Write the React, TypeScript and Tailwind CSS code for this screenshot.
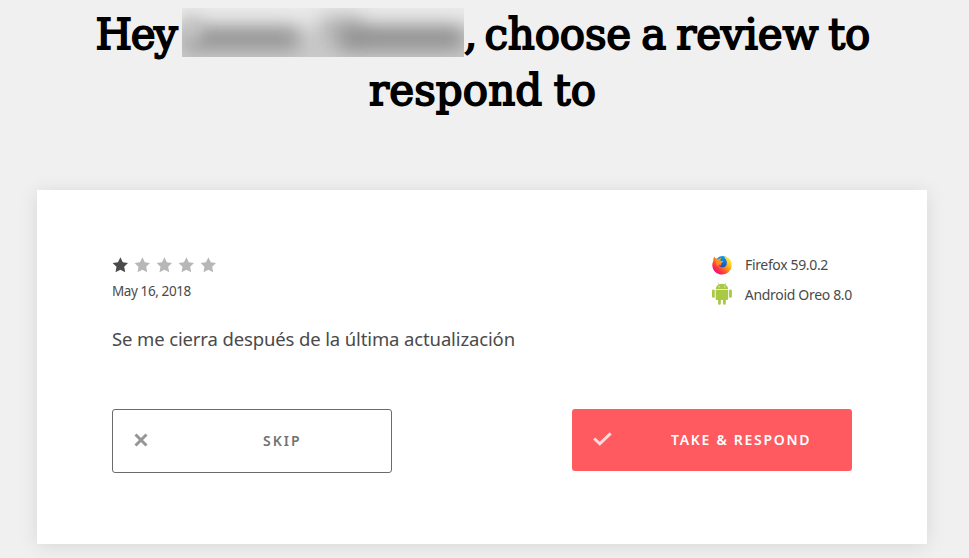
import React from "react";

const body = "font-['Noto_Sans','Open_Sans',sans-serif]";

function Star({ on }: { on?: boolean }) {
  return (
    <svg viewBox="0 0 16 16" className={on ? "size-4 text-[#4a4a4a]" : "size-4 text-[#b7b7b7]"}>
      <path fill="currentColor" d="M8.400 .3l2.400 4.900 5.200.8-3.800 3.800 1 5.500-4.800-2.500-4.900 2.500 1-5.500L.6 6l5.400-.8z" />
    </svg>
  );
}

function Firefox() {
  return (
    <svg viewBox="0 0 20 20" className="block size-5">
      <defs>
        <linearGradient id="fox" x1="0.9" y1="0.1" x2="0.15" y2="0.85">
          <stop offset="0" stopColor="#fff14a" />
          <stop offset="0.3" stopColor="#ffbd18" />
          <stop offset="0.55" stopColor="#ff7a1c" />
          <stop offset="0.8" stopColor="#ff3048" />
          <stop offset="1" stopColor="#e8137a" />
        </linearGradient>
        <linearGradient id="globe" x1="0.5" y1="0" x2="0.4" y2="1">
          <stop offset="0" stopColor="#0a9af0" />
          <stop offset="0.6" stopColor="#1460d0" />
          <stop offset="1" stopColor="#2a2b80" />
        </linearGradient>
      </defs>
      <circle cx="10.5" cy="8.4" r="7.4" fill="url(#globe)" />
      <path fill="url(#fox)" d="M2.5 1.6c.4 1 .9 1.7 1.7 2.1C5.300 3.400 6 3.500 6.900 4.100 8 3 9 2.800 9.500 2.700c-.9.900-1.300 1.700-1.300 2.600.8.700 2 .8 3 .9-.2 1.200-1.800 1.400-2 2.500-.3.700-.1 1.200.2 1.700-1 0-1.500-.3-2.100-.7.500 2.100 2.300 3 4.100 2.500 1.700-.4 2.600-1.500 3.300-2.800.5-2.500-.2-4.900-1.700-6.200-.5-.5-.8-1-.7-1.900 1.500.2 3 .8 4 2.100.3-.1.500-.2.600-.4 1.700 1.800 2.900 4.200 2.800 7.100C19.600 15.500 15.400 19.600 10 19.600S.3 15.400.3 10C.3 8.500.6 7.200 1.300 6 1.200 4.300 1.600 2.800 2.500 1.600z" />
      <path fill="#ff9818" d="M3.500 5.800c.8-1 2.300-1.300 3.600-.8L8.200 6.200l2.500.3c-.4 1-1.600 1.200-2 2.100L6.800 9.200 5 11z" opacity=".8" />
    </svg>
  );
}

function Android() {
  return (
    <svg viewBox="0 0 20 23" className="-mt-px block h-[23px] w-5" fill="#a9c944">
      <path d="M3.700 6.900C3.900 4.700 5.200 3.300 6.700 2.500L5.600.6l.4-.3 1.200 2a8 8 0 0 1 5.600 0L14 .3l.4.3-1.100 1.900c1.600.8 2.800 2.200 3 4.400z" />
      <path d="M3.700 7.600h12.600v9.200a1.300 1.300 0 0 1-1.300 1.300h-1.100v3.400a1.400 1.400 0 0 1-2.800 0v-3.400H8.900v3.400a1.400 1.400 0 0 1-2.800 0v-3.400H5a1.300 1.300 0 0 1-1.300-1.300z" />
      <rect x="0" y="7.400" width="2.800" height="8.500" rx="1.400" />
      <rect x="17.200" y="7.400" width="2.800" height="8.500" rx="1.400" />
      <circle cx="7.200" cy="4.700" r=".6" fill="#fff" />
      <circle cx="12.800" cy="4.700" r=".6" fill="#fff" />
    </svg>
  );
}

function HiddenName() {
  return (
    <span className="relative mt-2 block h-[49px] w-[282px] shrink-0 overflow-hidden bg-[#ebebeb]">
      <span className="absolute -left-4 top-[22px] h-[60px] w-[320px] bg-[#cccccc] blur-[9px]" />
      <span className="absolute left-[2px] top-[20px] h-[21px] w-[115px] bg-[#8c8c8c] blur-[10px]" />
      <span className="absolute left-[0px] top-[8px] h-[26px] w-[18px] bg-[#c4c4c4] blur-[8px]" />
      <span className="absolute left-[136px] top-[8px] h-[30px] w-[44px] bg-[#b8b8b8] blur-[10px]" />
      <span className="absolute left-[158px] top-[19px] h-[22px] w-[124px] bg-[#888888] blur-[10px]" />
    </span>
  );
}

const heading = "font-['DejaVu_Serif',serif] font-normal text-[42px] [word-spacing:-3px] [-webkit-text-stroke:1.8px_black]";

export default function App() {
  return (
    <main className="h-[558px] w-[969px] overflow-hidden bg-[#f0f0f0]">
      <h1 className={`${heading} h-[190px] leading-[56px] text-black`}>
        <span className="flex h-14 pl-[95.5px]">
          <span className="w-[86.5px] shrink-0 whitespace-nowrap pt-[7px] tracking-[-1.5px]">Hey</span>
          <HiddenName />
          <span className="whitespace-nowrap pt-[7px] tracking-[-0.17px]">
            <span className="tracking-[-1.6px]">, </span>choose a review to
          </span>
        </span>
        <span className="block whitespace-nowrap pl-[369px] pt-[7px] tracking-[0.1px] [word-spacing:-2px]">respond to</span>
      </h1>
      <section className={`${body} ml-[37px] h-[354px] w-[890px] bg-white px-[75px] pt-[65px] text-[#4a4a4a] shadow-[0_2px_18px_rgba(0,0,0,0.1)]`}>
        <div className="flex h-[72px] justify-between text-[14px]">
          <div>
            <div className="flex gap-1.5 pt-0.5">
              <Star on />
              <Star />
              <Star />
              <Star />
              <Star />
            </div>
            <div className="mt-[8px] whitespace-nowrap text-[13.5px] leading-5 tracking-[-0.4px]">May 16, 2018</div>
          </div>
          <div className="w-[140px]">
            <div className="flex h-5 items-center">
              <Firefox />
              <span className="ml-[13px] whitespace-nowrap leading-5 tracking-[-0.35px]">Firefox 59.0.2</span>
            </div>
            <div className="mt-[7px] flex h-6 items-center">
              <Android />
              <span className="ml-[13px] whitespace-nowrap pt-0.5 leading-5 tracking-[-0.32px]">Android Oreo 8.0</span>
            </div>
          </div>
        </div>
        <p className="-mt-px h-[83px] whitespace-nowrap text-[18.5px] leading-[26px] tracking-[-0.13px]">
          Se me cierra después de la última actualización
        </p>
        <div className="flex justify-between">
          <button className="flex h-16 w-[280px] items-center rounded-[3px] border border-[#6b6b6b] pb-0.5 pl-[21px] text-[#737373]">
            <svg viewBox="0 0 14 14" className="size-[14px] text-[#969696]">
              <path d="M1.500 1.500l11 11m0-11l-11 11" stroke="currentColor" strokeWidth="3" />
            </svg>
            <span className="ml-[115px] whitespace-nowrap text-[14px] font-semibold tracking-[2px]">SKIP</span>
          </button>
          <button className="flex h-[62px] w-[280px] items-center rounded-[3px] bg-[#ff5a5f] pb-0.5 pl-[21px] text-white">
            <svg viewBox="0 0 19 14" className="h-[14px] w-[19px] text-[#ffdcdd]">
              <path d="M1.200 6.500l5.600 5.300L17.700 1.300" fill="none" stroke="currentColor" strokeWidth="3" />
            </svg>
            <span className="ml-[59px] whitespace-nowrap text-[14px] font-semibold tracking-[1.7px]">TAKE &amp; RESPOND</span>
          </button>
        </div>
      </section>
    </main>
  );
}
